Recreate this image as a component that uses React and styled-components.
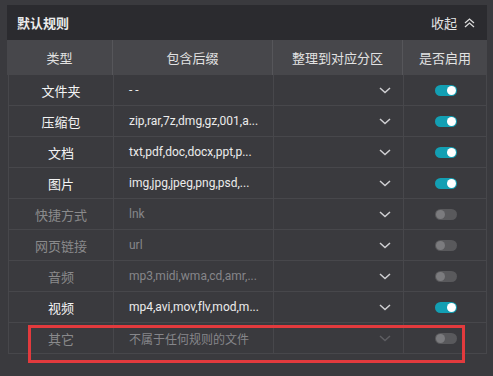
import React from "react";
import styled, { createGlobalStyle } from "styled-components";

const Global = createGlobalStyle`
  html, body { margin: 0; padding: 0; background: #3a3a3e; }
  body { font-family: "Noto Sans", "Noto Sans CJK SC", sans-serif; }
`;

const Page = styled.div`
  padding: 5px 6px 0 7px;
  width: 493px;
  height: 376px;
  box-sizing: border-box;
`;

const Panel = styled.div`
  width: 480px;
`;

const TitleBar = styled.div`
  height: 35px;
  background: #2b2b2f;
  display: flex;
  align-items: center;
  justify-content: space-between;
  padding: 0 12px 0 10px;
  color: #ececec;
`;

const Title = styled.div`
  font-size: 13px;
  font-weight: 700;
  font-family: "Noto Sans CJK SC", sans-serif;
`;

const Collapse = styled.div`
  display: flex;
  align-items: center;
  gap: 7px;
  font-size: 13px;
  color: #e4e4e4;
  font-family: "Noto Sans CJK SC", sans-serif;
`;

const Table = styled.div`
  display: grid;
  grid-template-columns: 105px 160px 130px 85px;
`;

const HeadCell = styled.div`
  height: 35px;
  background: #47474b;
  display: flex;
  align-items: center;
  justify-content: center;
  font-size: 13px;
  color: #e2e2e2;
  font-family: "Noto Sans CJK SC", sans-serif;
  border-left: ${(p) => (p.$first ? "none" : "1px solid #56565a")};
`;

const Row = styled.div`
  position: relative;
  grid-column: 1 / -1;
  display: grid;
  grid-template-columns: 104px 160px 130px 84px;
  height: 31px;
  box-sizing: border-box;
  border-bottom: 1px solid #47474b;
  border-left: 1px solid #47474b;
  border-right: 1px solid #47474b;
  margin-left: 1px;
`;

const Cell = styled.div`
  display: flex;
  align-items: center;
  min-width: 0;
  border-left: ${(p) => (p.$first ? "none" : "1px solid #47474b")};
  justify-content: ${(p) => p.$align || "flex-start"};
  padding: ${(p) => p.$pad || "0"};
`;

const TypeText = styled.span`
  font-size: 13px;
  font-family: "Noto Sans CJK SC", sans-serif;
  color: ${(p) => (p.$on ? "#f4f4f4" : "#8a8a8c")};
`;

const SuffixText = styled.span`
  font-size: 12px;
  white-space: nowrap;
  font-variant-ligatures: none;
  font-feature-settings: "liga" 0, "clig" 0;
  font-family: "Roboto", "Noto Sans CJK SC", sans-serif;
  color: ${(p) => (p.$on ? "#ececec" : "#86868a")};
`;

const Track = styled.div`
  width: 22px;
  height: 11px;
  border-radius: 6px;
  background: ${(p) => (p.$on ? "#139fb3" : "#59595c")};
  position: relative;
`;

const Knob = styled.div`
  position: absolute;
  top: 1px;
  width: 9px;
  height: 9px;
  border-radius: 50%;
  background: ${(p) => (p.$on ? "#ffffff" : "#7b7b7e")};
  left: ${(p) => (p.$on ? "12px" : "1px")};
`;

const Highlight = styled.div`
  position: absolute;
  left: 19px;
  right: 21px;
  top: 2px;
  bottom: -10px;
  border: 3px solid #e23a3d;
  pointer-events: none;
`;

const Chevron = ({ dim }) => (
  <svg width="12" height="7" viewBox="0 0 12 7">
    <path
      d="M1 1 L6 5.5 L11 1"
      fill="none"
      stroke={dim ? "#5e5e62" : "#cfcfd2"}
      strokeWidth="1.5"
    />
  </svg>
);

const DoubleUp = () => (
  <svg width="11" height="10" viewBox="0 0 11 10">
    <path d="M1 5 L5.5 1 L10 5" fill="none" stroke="#dcdcdc" strokeWidth="1.3" />
    <path d="M1 9 L5.5 5 L10 9" fill="none" stroke="#dcdcdc" strokeWidth="1.3" />
  </svg>
);

const rows = [
  { type: "文件夹", suffix: "- -", on: true },
  { type: "压缩包", suffix: "zip,rar,7z,dmg,gz,001,a...", on: true },
  { type: "文档", suffix: "txt,pdf,doc,docx,ppt,p...", on: true },
  { type: "图片", suffix: "img,jpg,jpeg,png,psd,...", on: true },
  { type: "快捷方式", suffix: "lnk", on: false },
  { type: "网页链接", suffix: "url", on: false },
  { type: "音频", suffix: "mp3,midi,wma,cd,amr,...", on: false },
  { type: "视频", suffix: "mp4,avi,mov,flv,mod,m...", on: true },
  { type: "其它", suffix: "不属于任何规则的文件", on: false, other: true },
];

export default function App() {
  return (
    <>
      <Global />
      <Page>
        <Panel>
          <TitleBar>
            <Title>默认规则</Title>
            <Collapse>
              收起 <DoubleUp />
            </Collapse>
          </TitleBar>
          <Table>
            <HeadCell $first>类型</HeadCell>
            <HeadCell>包含后缀</HeadCell>
            <HeadCell>整理到对应分区</HeadCell>
            <HeadCell>是否启用</HeadCell>
            {rows.map((r) => (
              <Row key={r.type}>
                <Cell $first $align="center">
                  <TypeText $on={r.on}>{r.type}</TypeText>
                </Cell>
                <Cell $pad="0 4px 0 15px">
                  <SuffixText $on={r.on}>{r.suffix}</SuffixText>
                </Cell>
                <Cell $align="flex-end" $pad="0 12px 0 0">
                  <Chevron dim={r.other} />
                </Cell>
                <Cell $align="center">
                  <Track $on={r.on}>
                    <Knob $on={r.on} />
                  </Track>
                </Cell>
                {r.other && <Highlight />}
              </Row>
            ))}
          </Table>
        </Panel>
      </Page>
    </>
  );
}
